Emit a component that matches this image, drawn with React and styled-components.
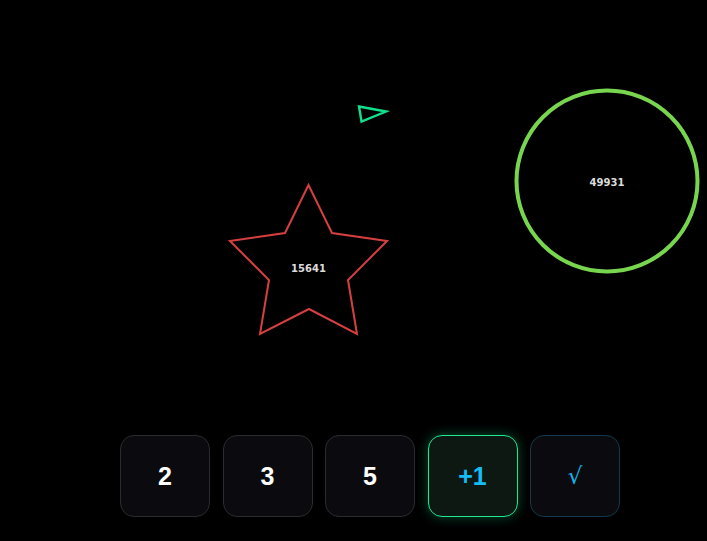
import styled, { createGlobalStyle } from 'styled-components';

const Global = createGlobalStyle`
  html, body { margin: 0; padding: 0; background: #000; }
  body { font-family: "Liberation Sans", Arial, sans-serif; }
  #root { height: 100vh; }
`

const Screen = styled.div`
  height: 100vh;
  display: flex;
  flex-direction: column;
  background: #000;
  overflow: hidden;
`

const Arena = styled.div`
  position: relative;
  flex: 1;
`

const Shape = styled.div`
  position: absolute;
  display: flex;
  justify-content: center;
  align-items: center;
`

const Label = styled.span`
  position: absolute;
  font-family: "DejaVu Sans", Verdana, sans-serif;
  font-size: 10px;
  font-weight: bold;
  color: #dcdcdc;
  text-shadow: 0 0 2px #000;
`

const Bar = styled.div`
  display: flex;
  gap: 12.5px;
  padding: 0 0 24px 120px;
`

const Key = styled.button`
  width: 90px;
  height: 82px;
  flex: none;
  box-sizing: border-box;
  border-radius: 14px;
  border: 1px solid ${p => p.$border || '#2b2b2f'};
  background: ${p => p.$bg || '#0b0b0f'};
  color: ${p => p.$color || '#fff'};
  font-family: ${p => p.$light ? '"DejaVu Sans", sans-serif' : '"Liberation Sans", Arial, sans-serif'};
  font-size: ${p => p.$light ? '23px' : '25px'};
  font-weight: ${p => p.$light ? 'normal' : 'bold'};
  display: flex;
  align-items: center;
  justify-content: center;
  padding: 0;
  box-shadow: ${p => p.$glow ? '0 0 12px rgba(20, 230, 140, 0.35)' : 'none'};
`

const Star = () => (
  <Shape style={{ left: 228, top: 183, width: 161, height: 153 }}>
    <svg width="161" height="153" viewBox="228 183 161 153">
      <polygon
        points="308.5,185 332,233 387,241 348,280 357,334 309,309 260,334 269,280 230,241 285,233"
        fill="none" stroke="#d63f3f" strokeWidth="2" strokeLinejoin="miter" />
    </svg>
    <Label style={{ top: 80 }}>15641</Label>
  </Shape>
)

const Triangle = () => (
  <Shape style={{ left: 355, top: 102, width: 36, height: 24 }}>
    <svg width="36" height="24" viewBox="355 102 36 24">
      <polygon points="359,106.5 386,111.5 361.5,121.5" fill="none"
        stroke="#10e08c" strokeWidth="2.4" strokeLinejoin="miter" />
    </svg>
  </Shape>
)

const Ring = () => (
  <Shape style={{ left: 514, top: 88, width: 186, height: 186 }}>
    <svg width="186" height="186" viewBox="0 0 186 186">
      <circle cx="93" cy="93" r="90.5" fill="none" stroke="#78d64e" strokeWidth="4" />
    </svg>
    <Label style={{ top: 89 }}>49931</Label>
  </Shape>
)

export default function App() {
  return (
    <Screen>
      <Global />
      <Arena>
        <Triangle />
        <Star />
        <Ring />
      </Arena>
      <Bar>
        <Key>2</Key>
        <Key>3</Key>
        <Key>5</Key>
        <Key $border="#1fe890" $bg="#0d1812" $color="#14bdf5" $glow>+1</Key>
        <Key $border="#0f3b4a" $color="#14b4e6" $light>√</Key>
      </Bar>
    </Screen>
  )
}
